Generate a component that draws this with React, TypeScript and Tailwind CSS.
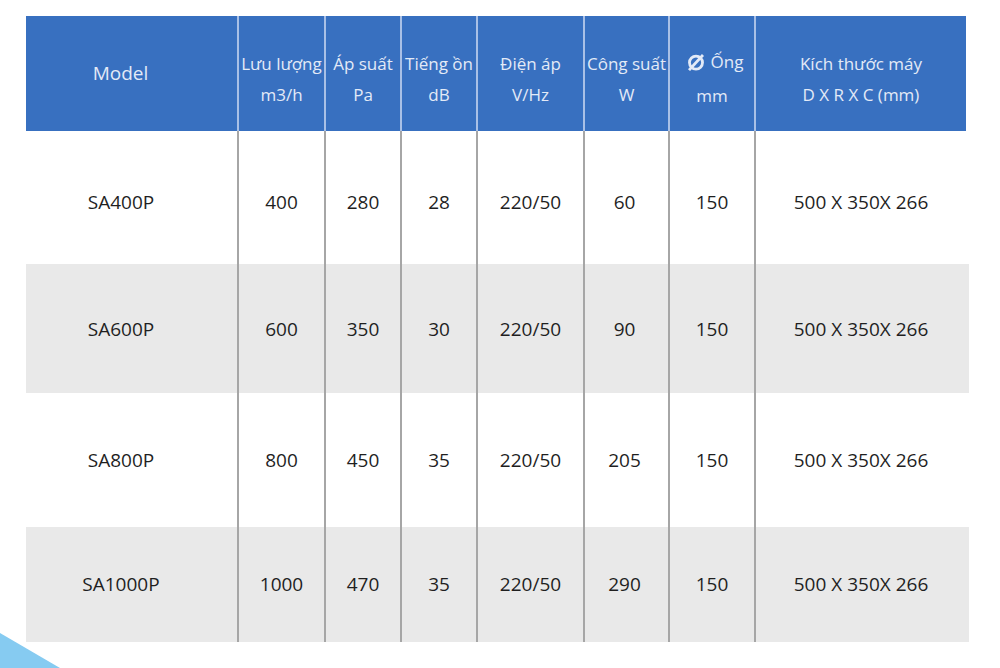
const cols = "grid-cols-[211px_87px_76px_76px_107px_85px_86px_212px]";

type Row = {
  model: string;
  flow: string;
  pressure: string;
  noise: string;
  voltage: string;
  power: string;
  pipe: string;
  size: string;
};

const rows: (Row & { h: string; bg: string; pt: string })[] = [
  { model: "SA400P", flow: "400", pressure: "280", noise: "28", voltage: "220/50", power: "60", pipe: "150", size: "500 X 350X 266", h: "h-[133px]", bg: "bg-white", pt: "pt-[9px]" },
  { model: "SA600P", flow: "600", pressure: "350", noise: "30", voltage: "220/50", power: "90", pipe: "150", size: "500 X 350X 266", h: "h-[129px]", bg: "bg-[#e9e9e9]", pt: "pt-[2px]" },
  { model: "SA800P", flow: "800", pressure: "450", noise: "35", voltage: "220/50", power: "205", pipe: "150", size: "500 X 350X 266", h: "h-[134px]", bg: "bg-white", pt: "pt-0" },
  { model: "SA1000P", flow: "1000", pressure: "470", noise: "35", voltage: "220/50", power: "290", pipe: "150", size: "500 X 350X 266", h: "h-[115px]", bg: "bg-[#e9e9e9]", pt: "pt-0" },
];

function HeadCell({ top, bottom, first }: { top: React.ReactNode; bottom?: string; first?: boolean }) {
  return (
    <div
      className={
        "flex flex-col items-center justify-center text-center whitespace-nowrap " +
        (first ? "pr-[22px]" : "pt-[10px] border-l-2 border-[#a9c0e6]")
      }
    >
      <span>{top}</span>
      {bottom && <span>{bottom}</span>}
    </div>
  );
}

function BodyCell({ children, first, pt, extra }: { children: React.ReactNode; first?: boolean; pt: string; extra?: string }) {
  return (
    <div
      className={
        `flex items-center justify-center whitespace-nowrap ${pt} ${extra ?? ""} ` +
        (first ? "pr-[21px]" : "border-l-2 border-[#a6a6a6]")
      }
    >
      {children}
    </div>
  );
}

export default function App() {
  return (
    <div
      className="relative w-[1000px] h-[668px] bg-white overflow-hidden"
      style={{ fontFamily: '"Open Sans", "Noto Sans", sans-serif' }}
    >
      <div className="pl-[26px] pt-[16px]">
        {/* ── header ── */}
        <div className={`grid ${cols} h-[115px] w-[940px] bg-[#3870c0] text-[#e3eaf7] text-[17px] leading-[31px]`}>
          <HeadCell first top={<span className="text-[19px]">Model</span>} />
          <HeadCell top="Lưu lượng" bottom="m3/h" />
          <HeadCell top="Áp suất" bottom="Pa" />
          <HeadCell top="Tiếng ồn" bottom="dB" />
          <HeadCell top="Điện áp" bottom="V/Hz" />
          <HeadCell top="Công suất" bottom="W" />
          <HeadCell
            top={
              <span className="inline-flex items-center gap-[6px] pl-[6px]">
                <svg width="18" height="18" viewBox="0 0 16 16" fill="none" stroke="currentColor" strokeWidth="2.5">
                  <circle cx="8" cy="8.5" r="5.8" />
                  <path d="M1.8 15.2L14.2 1.8" />
                </svg>
                Ống
              </span>
            }
            bottom="mm"
          />
          <HeadCell top="Kích thước máy" bottom="D X R X C (mm)" />
        </div>

        {/* ── rows ── */}
        {rows.map((r) => (
          <div key={r.model} className={`grid ${cols} w-[943px] ${r.h} ${r.bg} text-[#1f1f1f] text-[19px]`}>
            <BodyCell first pt={r.pt}>{r.model}</BodyCell>
            <BodyCell pt={r.pt}>{r.flow}</BodyCell>
            <BodyCell pt={r.pt}>{r.pressure}</BodyCell>
            <BodyCell pt={r.pt}>{r.noise}</BodyCell>
            <BodyCell pt={r.pt}>{r.voltage}</BodyCell>
            <BodyCell pt={r.pt} extra="pr-[4px]">{r.power}</BodyCell>
            <BodyCell pt={r.pt}>{r.pipe}</BodyCell>
            <BodyCell pt={r.pt}>{r.size}</BodyCell>
          </div>
        ))}
      </div>

      {/* corner decoration */}
      <svg className="absolute left-0 bottom-0" width="70" height="40" viewBox="0 0 70 40">
        <polygon points="0,5 60,40 0,40" fill="#86cbf1" />
      </svg>
    </div>
  );
}
